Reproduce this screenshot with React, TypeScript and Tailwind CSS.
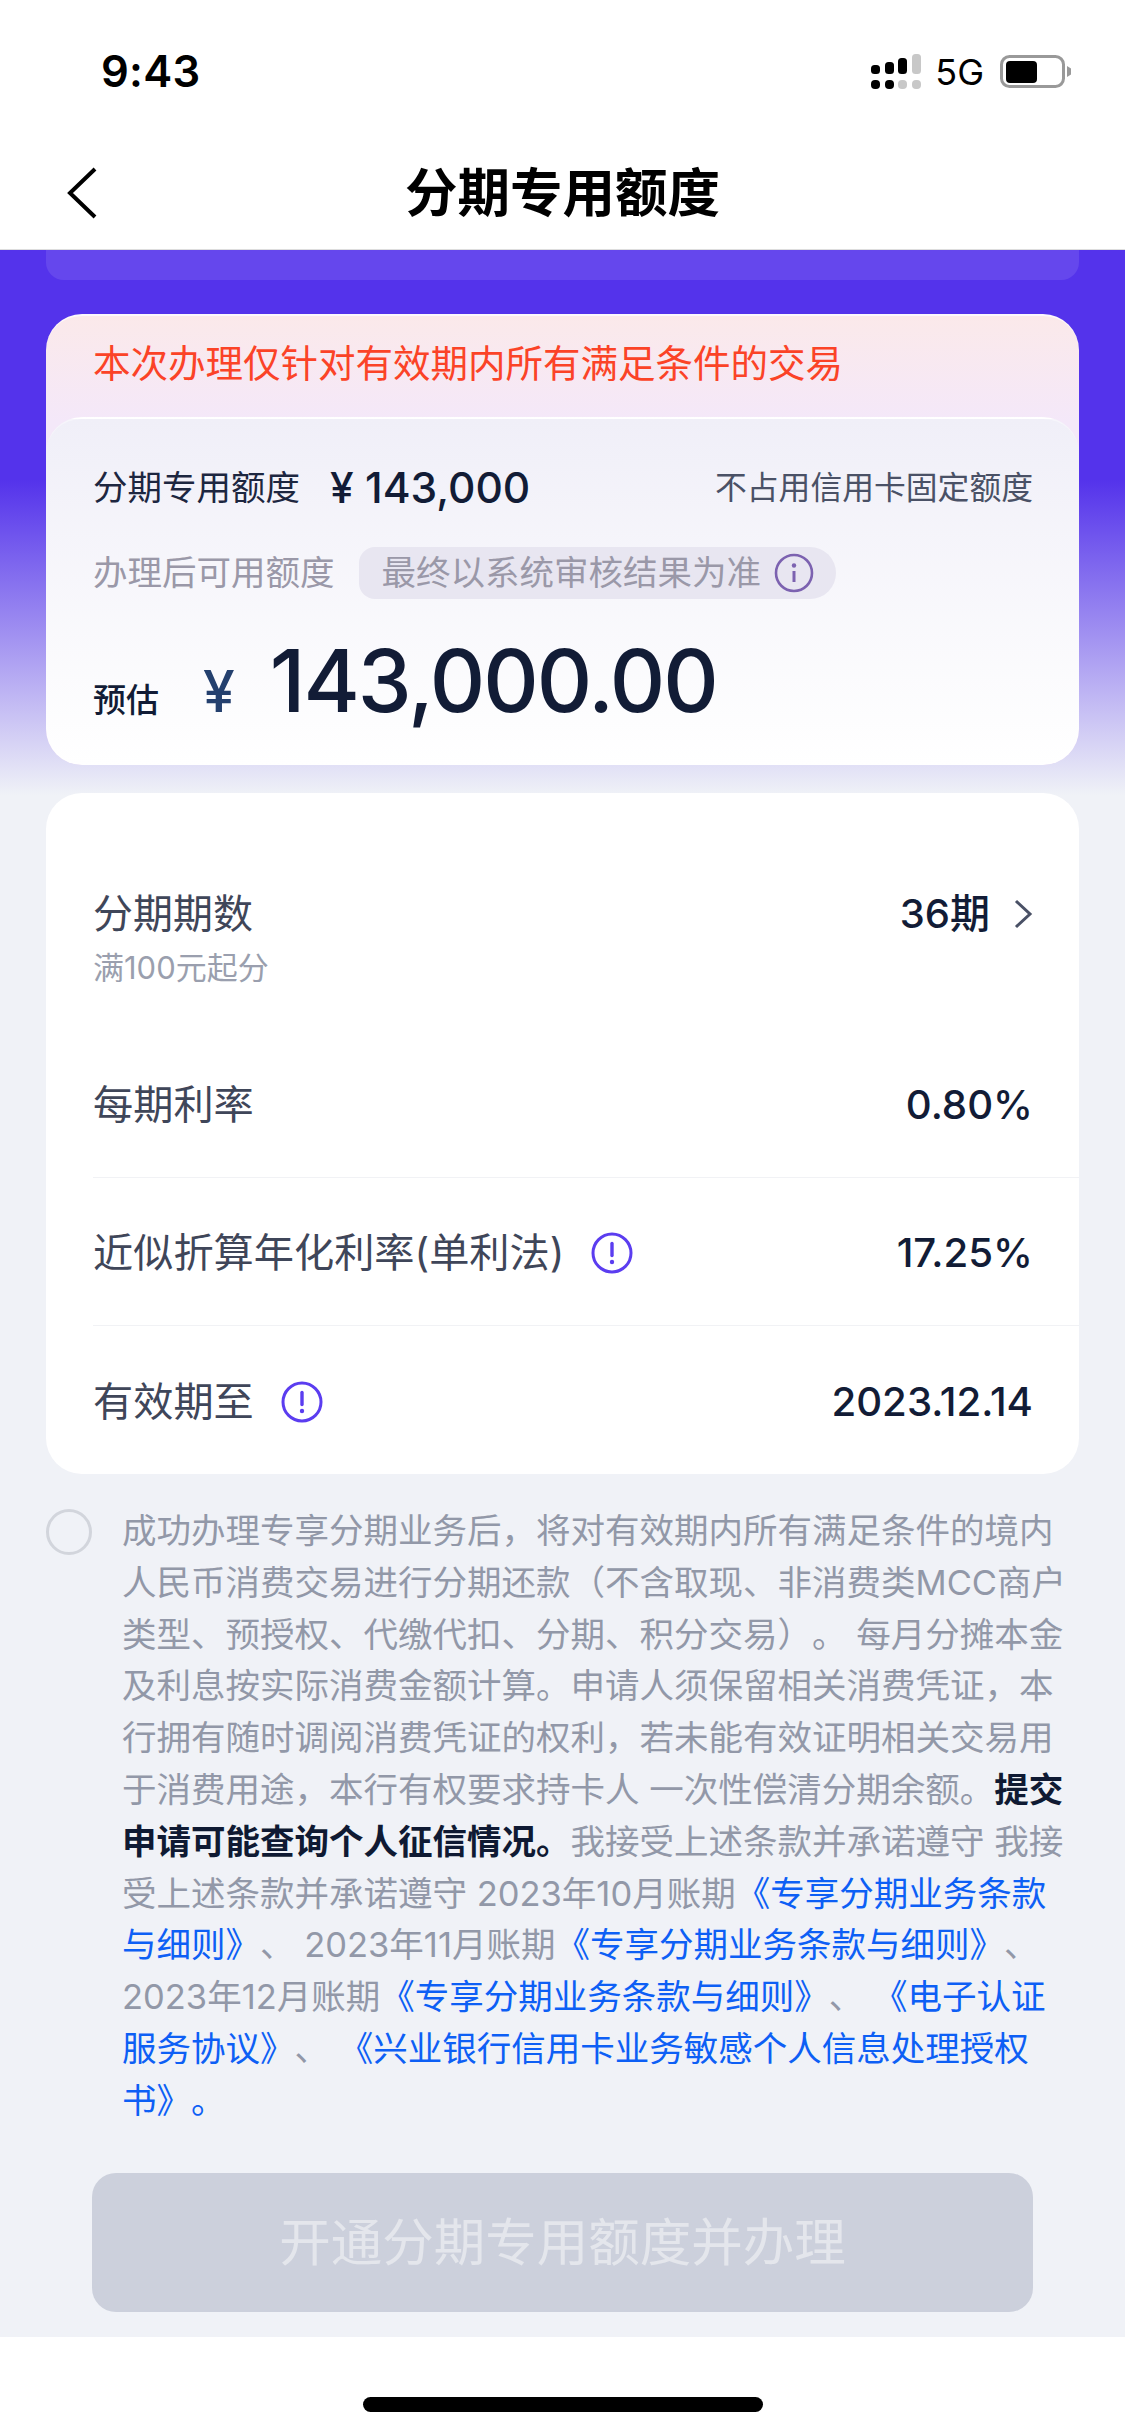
import React from "react";

function Signal() {
  return (
    <svg width="52" height="36" viewBox="0 0 52 36" className="block">
      <rect x="1" y="11" width="9" height="9" rx="3.5" fill="#000" />
      <rect x="15" y="8" width="9" height="12" rx="3.5" fill="#000" />
      <rect x="28" y="4" width="9" height="16" rx="3.5" fill="#000" />
      <rect x="42" y="0" width="9" height="20" rx="3.5" fill="#c8c8c8" />
      <rect x="1" y="26" width="9" height="9" rx="4" fill="#000" />
      <rect x="15" y="26" width="9" height="9" rx="4" fill="#000" />
      <rect x="28" y="26" width="9" height="9" rx="4" fill="#c8c8c8" />
      <rect x="42" y="26" width="9" height="9" rx="4" fill="#c8c8c8" />
    </svg>
  );
}

function Battery() {
  return (
    <svg width="72" height="34" viewBox="0 0 72 34" className="block ml-[3px]">
      <rect x="1.5" y="1.5" width="62" height="30" rx="8" fill="none" stroke="#999" strokeWidth="3" />
      <rect x="6" y="6" width="31" height="22" rx="4" fill="#000" />
      <path d="M67 11 L71 13.5 V19.5 L67 22 Z" fill="#999" />
    </svg>
  );
}

function Warn() {
  return (
    <svg width="42" height="42" viewBox="0 0 42 42" className="block shrink-0">
      <circle cx="21" cy="21" r="19" fill="none" stroke="#5b3df0" strokeWidth="3" />
      <path d="M21 11.5 V23.5" stroke="#5b3df0" strokeWidth="3.4" strokeLinecap="round" />
      <circle cx="21" cy="30" r="2.2" fill="#5b3df0" />
    </svg>
  );
}

function Row({ label, value, icon, border }: { label: string; value: string; icon?: boolean; border?: boolean }) {
  return (
    <div className={`ml-[47px] pr-[46px] pt-[3px] h-[148px] flex items-center justify-between ${border ? "border-b border-[#f1f2f5]" : ""}`}>
      <div className="flex items-center gap-[27px]">
        <span className="text-[40.2px] leading-[48px] text-[#3f4659]">{label}</span>
        {icon && <Warn />}
      </div>
      <span className="text-[40.2px] leading-[48px] font-medium text-[#121c36]">{value}</span>
    </div>
  );
}

export default function App() {
  return (
    <div lang="zh-CN" className="w-[1125px] h-[2435px] flex flex-col bg-white overflow-hidden [text-spacing-trim:space-all] font-['Inter','Noto_Sans_CJK_SC',sans-serif]">
      <div className="h-[144px] shrink-0 flex items-center justify-between pl-[101px] pr-[53px]">
        <span className="text-[43.5px] font-semibold text-black tracking-[0.3px]">9:43</span>
        <div className="flex items-center gap-[13px]">
          <Signal />
          <span className="text-[36px] leading-none text-black">5G</span>
          <Battery />
        </div>
      </div>
      <div className="h-[106px] shrink-0 grid grid-cols-[1fr_auto_1fr] items-center pl-[66px] pb-[8px] border-b border-[#dddddd]">
        <svg width="32" height="52" viewBox="0 0 32 52" className="block">
          <path d="M29 2 L4 26 L29 50" fill="none" stroke="#000" strokeWidth="4" strokeLinejoin="miter" />
        </svg>
        <span className="text-[52.5px] leading-[60px] font-bold text-black -ml-[66px]">分期专用额度</span>
        <span />
      </div>

      <div className="flex-1 flex flex-col bg-[linear-gradient(to_bottom,#5433eb_0px,#5433eb_230px,#f0f2f7_545px)]">
        <div className="mx-[46px] h-[30px] shrink-0 rounded-b-[18px] bg-white/10" />

        <div className="mx-[46px] mt-[34px] h-[451px] shrink-0 rounded-[36px] border-t-2 border-white/70 bg-[linear-gradient(to_bottom,#fbe9ea_0px,#f4e8f9_105px)] flex flex-col overflow-hidden">
          <div className="h-[101px] shrink-0 pl-[47px] pb-[6px] flex items-center">
            <span className="text-[37.5px] leading-[46px] text-[#fb4327]">本次办理仅针对有效期内所有满足条件的交易</span>
          </div>
          <div className="flex-1 rounded-[36px] border-t-2 border-white/40 bg-[linear-gradient(to_bottom,#f0eff8,#ffffff)] pl-[47px] pr-[46px] flex flex-col">
            <div className="mt-[45px] h-[48px] flex items-center justify-between">
              <div className="flex items-center gap-[30px]">
                <span className="text-[34.5px] leading-[48px] text-[#1d2640]">分期专用额度</span>
                <span className="text-[42.5px] leading-[48px] font-medium text-[#121c36]">¥ 143,000</span>
              </div>
              <span className="text-[31.8px] leading-[48px] text-[#4a5166]">不占用信用卡固定额度</span>
            </div>
            <div className="mt-[35px] h-[52px] flex items-center">
              <span className="text-[34.5px] leading-[52px] text-[#9a98a8]">办理后可用额度</span>
              <div className="ml-[24px] w-[477px] h-[52px] rounded-r-[26px] rounded-l-[16px] bg-[#e8e6f1] pl-[23px] flex items-center gap-[13px]">
                <span className="text-[34.5px] leading-[52px] whitespace-nowrap text-[#9a98a8]">最终以系统审核结果为准</span>
                <svg width="40" height="40" viewBox="0 0 40 40" className="block shrink-0">
                  <circle cx="20" cy="20" r="18" fill="none" stroke="#7c62b0" strokeWidth="2.6" />
                  <circle cx="20" cy="12.5" r="2.2" fill="#7c62b0" />
                  <path d="M20 18 V29" stroke="#7c62b0" strokeWidth="3" />
                </svg>
              </div>
            </div>
            <div className="mt-[36px] flex items-baseline h-[92px]">
              <span className="text-[33px] leading-[40px] font-medium text-[#121c36]">预估</span>
              <span className="ml-[44px] text-[57px] leading-[60px] font-medium text-[#24406e]">¥</span>
              <span className="ml-[35px] text-[86px] leading-[92px] font-medium tracking-[-2px] text-[#121c36]">143,000.00</span>
            </div>
          </div>
        </div>

        <div className="mx-[46px] mt-[28px] h-[681px] shrink-0 rounded-[36px] bg-white flex flex-col">
          <div className="h-[237px] shrink-0 ml-[47px] pr-[46px] flex justify-between items-start pt-[97px]">
            <div className="flex flex-col">
              <span className="text-[40px] leading-[48px] text-[#3f4659]">分期期数</span>
              <span className="mt-[12px] text-[31px] leading-[36px] text-[#9a9fae]">满100元起分</span>
            </div>
            <div className="flex items-center gap-[23px] h-[48px]">
              <span className="text-[40px] leading-[48px] font-medium text-[#121c36]">36期</span>
              <svg width="20" height="30" viewBox="0 0 20 30" className="block">
                <path d="M3 2 L17 15 L3 28" fill="none" stroke="#4a5166" strokeWidth="3" />
              </svg>
            </div>
          </div>
          <Row label="每期利率" value="0.80%" border />
          <Row label="近似折算年化利率(单利法)" value="17.25%" icon border />
          <Row label="有效期至" value="2023.12.14" icon />
        </div>

        <div className="mt-[31px] pl-[46px] flex items-start gap-[30px]">
          <div className="mt-[4px] w-[46px] h-[46px] shrink-0 rounded-full border-[3px] border-[#d2d5dc]" />
          <p className="w-[980px] text-[34.5px] leading-[51.8px] whitespace-nowrap text-[#9298a8]">
            成功办理专享分期业务后，将对有效期内所有满足条件的境内<br />
            人民币消费交易进行分期还款（不含取现、非消费类MCC商户<br />
            类型、预授权、代缴代扣、分期、积分交易）。 每月分摊本金<br />
            及利息按实际消费金额计算。申请人须保留相关消费凭证，本<br />
            行拥有随时调阅消费凭证的权利，若未能有效证明相关交易用<br />
            于消费用途，本行有权要求持卡人 一次性偿清分期余额。<strong className="font-bold text-[#0f1a33]">提交</strong><br />
            <strong className="font-bold text-[#0f1a33]">申请可能查询个人征信情况。</strong>我接受上述条款并承诺遵守 我接<br />
            受上述条款并承诺遵守 2023年10月账期<span className="text-[#0d5ff5]">《专享分期业务条款</span><br />
            <span className="text-[#0d5ff5]">与细则》</span>、 2023年11月账期<span className="text-[#0d5ff5]">《专享分期业务条款与细则》</span>、<br />
            2023年12月账期<span className="text-[#0d5ff5]">《专享分期业务条款与细则》</span>、 <span className="text-[#0d5ff5]">《电子认证</span><br />
            <span className="text-[#0d5ff5]">服务协议》</span>、 <span className="text-[#0d5ff5]">《兴业银行信用卡业务敏感个人信息处理授权</span><br />
            <span className="text-[#0d5ff5]">书》。</span>
          </p>
        </div>

        <div className="mx-[92px] mt-[46px] h-[139px] shrink-0 rounded-[24px] bg-[#ccd0dc] flex items-center justify-center">
          <span className="text-[51.5px] leading-[60px] text-[#e4e6ec]">开通分期专用额度并办理</span>
        </div>
      </div>

      <div className="h-[98px] shrink-0 bg-white flex justify-center pt-[60px]">
        <div className="w-[400px] h-[15px] rounded-full bg-black" />
      </div>
    </div>
  );
}
